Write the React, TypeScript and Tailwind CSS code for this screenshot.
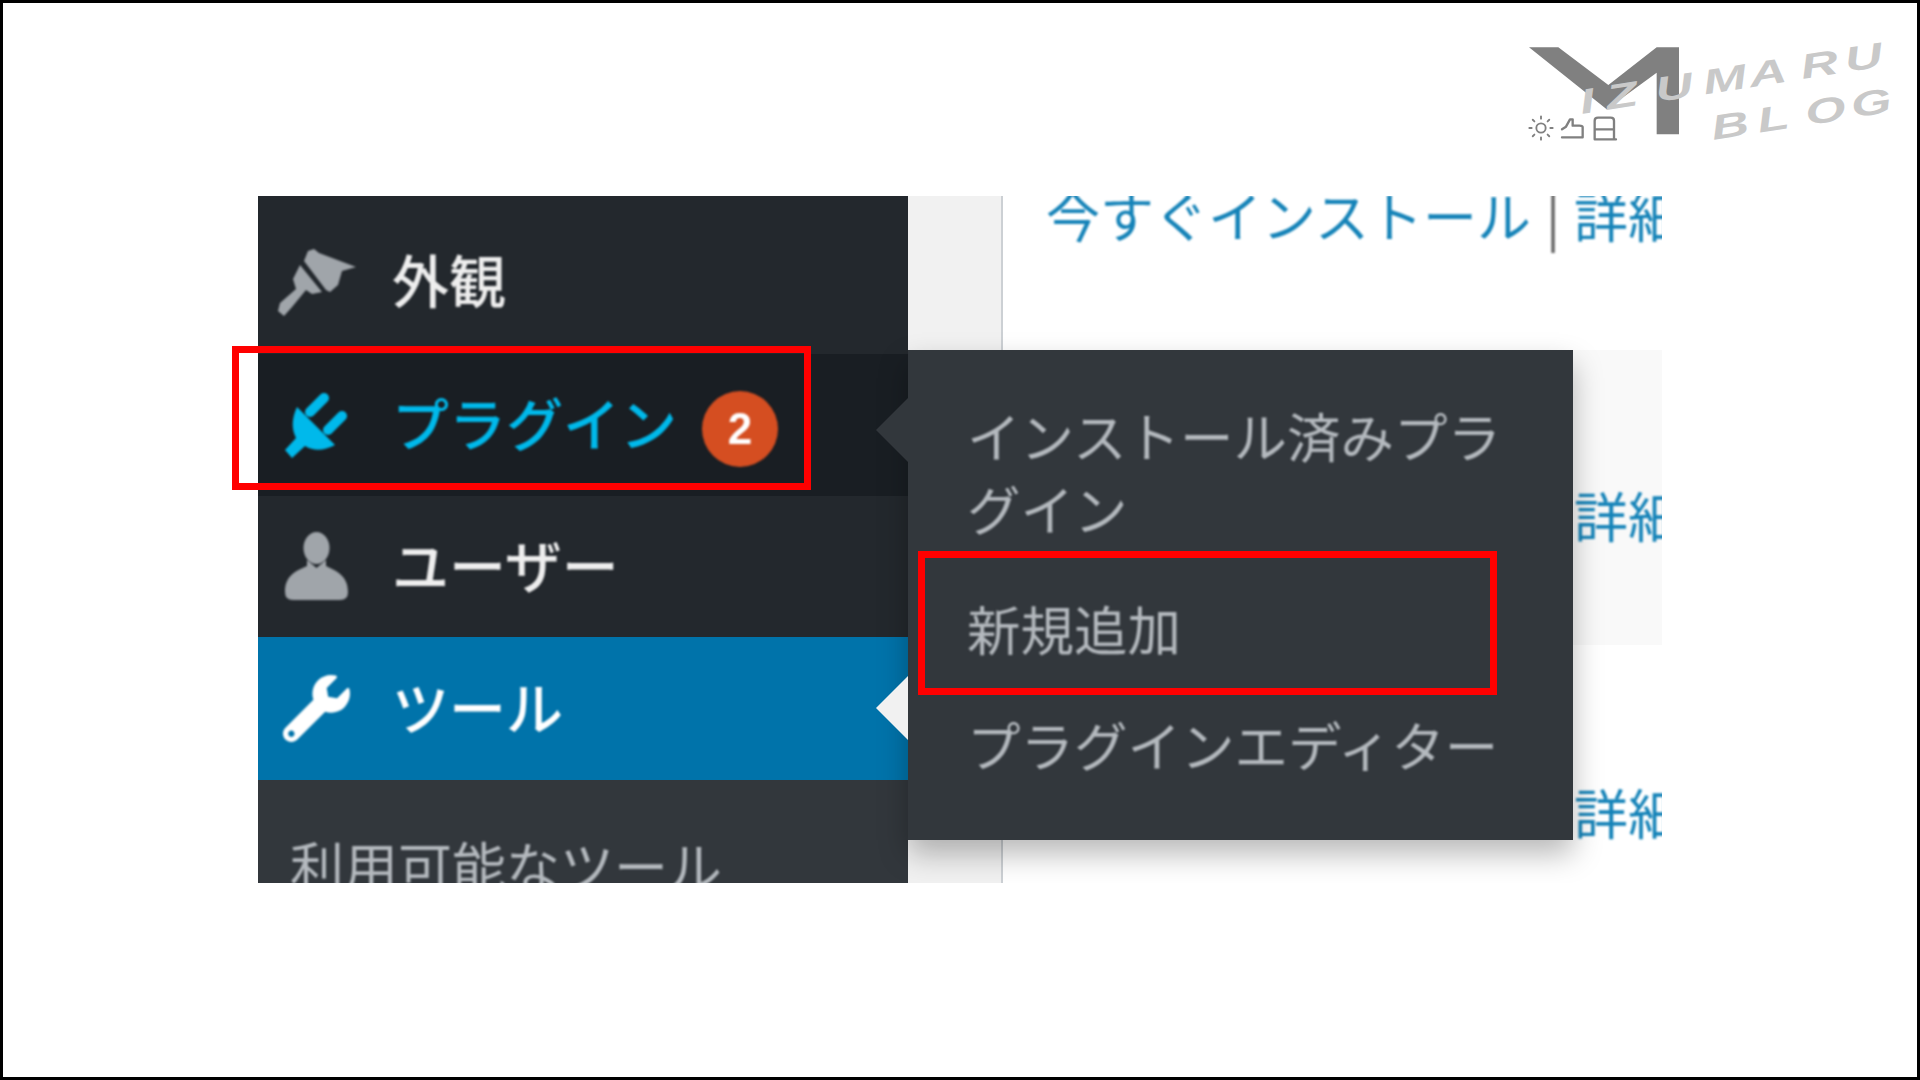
import { FaWrench } from "react-icons/fa";
import { Sun } from "lucide-react";

const jp = { fontFamily: '"Noto Sans CJK JP", "Noto Sans", sans-serif' };

function Brush() {
  return (
    <svg width="78" height="67" viewBox="0 0 78 67" fill="#a0a5aa">
      <path d="M30 2 L36 0 L41 4 L78 18 L64 22 L60 36 L52 43 L48 41 L26 12 Z" />
      <path d="M22 16 L44 43 L34 45 L28 41 L14 58 L6 67 L0 62 L2 54 L18 40 L15 30 Z" />
    </svg>
  );
}

function Plug() {
  return (
    <svg width="67" height="67" viewBox="0 0 67 67" fill="#00b9eb">
      <path d="M13 15 L51 53 Q34 62 21 54 L8 66 L1 58 L12 46 Q5 32 13 15 Z" />
      <path d="M26 20 L40 6" stroke="#00b9eb" strokeWidth="10" strokeLinecap="round" />
      <path d="M44 38 L58 24" stroke="#00b9eb" strokeWidth="10" strokeLinecap="round" />
    </svg>
  );
}

function User() {
  return (
    <svg width="63" height="69" viewBox="0 0 63 69" fill="#a0a5aa">
      <ellipse cx="31.5" cy="16" rx="13" ry="16" />
      <path d="M22 28 L22 34 C10 39 0 44 0 60 Q0 68 8 68 L55 68 Q63 68 63 60 C63 44 52 39 41 34 L41 28 L31.5 36 Z" />
    </svg>
  );
}

function Logo() {
  return (
    <svg width="440" height="140" viewBox="0 0 1320 420" className="absolute left-[1477px] top-[17px]">
      <polygon points="147,82 235,82 385,195 530,82 597,82 597,343 530,343 530,158 380,268" fill="#808080" />
      <g style={{ fontFamily: '"Liberation Sans", sans-serif', fontStyle: "italic", fontWeight: 700 }} fill="#c9c9c9" fontSize="104">
        <text transform="rotate(-9 305 282) translate(305 282) scale(1.5 1)" x="0 53 153 250 343 447 537" y="0">IZUMARU</text>
        <text transform="rotate(-9 700 360) translate(700 360) scale(1.5 1)" x="0 93 190 283" y="0">BLOG</text>
      </g>
      <g fill="none" stroke="#808080" strokeWidth="7" strokeLinejoin="round" strokeLinecap="round">
        <path d="M246 352 L308 352 L308 322 Q308 317 298 317 L278 317 L278 298 L270 298 L258 320 L246 328" />
        <path d="M344 358 L344 302 Q344 293 354 293 L392 293 Q402 293 402 302 L402 358 M344 328 L402 328 M344 358 L408 358" />
      </g>
    </svg>
  );
}

function DetailRow({ className, full }: { className: string; full?: boolean }) {
  return (
    <div className={className}>
      <div className="flex whitespace-nowrap text-[54px] leading-[73px] text-[#1583b8] blur-[1.2px]" style={jp}>
        {full ? (
          <>
            <span className="w-[486px] shrink-0">今すぐインストール</span>
            <span className="w-[42px] shrink-0 text-center text-[#666]">|</span>
          </>
        ) : (
          <span className="w-[528px] shrink-0" />
        )}
        <span>詳細を表示</span>
      </div>
    </div>
  );
}

function SideRow({ bg, icon, iconBox, label, color, extra, pt }: any) {
  return (
    <div className={`flex shrink-0 items-center ${bg} ${pt}`}>
      <div className={iconBox}>{icon}</div>
      <span className={`mb-[7px] text-[57px] font-medium leading-none ${color} blur-[1px]`} style={jp}>{label}</span>
      {extra}
    </div>
  );
}

export default function App() {
  return (
    <div className="relative h-screen w-screen overflow-hidden border-[3px] border-black bg-white">
      <div className="ml-[255px] mt-[193px] flex h-[687px] w-[1404px]">
        <div className="relative flex h-full w-full overflow-hidden">
          <div className="flex w-[650px] shrink-0 flex-col bg-[#32373c]">
            <SideRow bg="bg-[#23282d] h-[158px]" pt="pt-[14px]" iconBox="ml-[20px] mr-[36px] flex w-[78px] justify-center blur-[1px]" icon={<Brush />} label="外観" color="text-[#eeeeee]" />
            <SideRow
              bg="bg-[#191e23] h-[142px]"
              pt="pt-0"
              iconBox="ml-[26px] mr-[41px] blur-[0.8px]"
              icon={<Plug />}
              label="プラグイン"
              color="text-[#00b9eb]"
              extra={
                <span className="ml-[25px] mt-[8px] flex h-[76px] w-[76px] items-center justify-center rounded-full bg-[#d54e21] text-[44px] font-bold text-white blur-[0.8px]" style={{ fontFamily: '"Liberation Sans", sans-serif' }}>2</span>
              }
            />
            <SideRow bg="bg-[#23282d] h-[141px]" pt="pt-0" iconBox="ml-[27px] mr-[44px] blur-[1px]" icon={<User />} label="ユーザー" color="text-[#eeeeee]" />
            <SideRow bg="bg-[#0073aa] h-[143px]" pt="pt-0" iconBox="ml-[25px] mr-[42px] text-white blur-[0.8px]" icon={<FaWrench size={67} />} label="ツール" color="text-white" />
            <div className="shrink-0 whitespace-nowrap pl-[32px] pt-[49px] text-[54px] leading-[72px] text-[#b4b9be] blur-[1px]" style={jp}>利用可能なツール</div>
          </div>

          <div className="w-[93px] shrink-0 bg-[#f1f1f1]" />
          <div className="flex-1 overflow-hidden border-l-2 border-[#ccd0d4] bg-white">
            <DetailRow full className="-mt-[18px] h-[154px] pl-[43px]" />
            <DetailRow className="mt-[18px] h-[295px] bg-[#f9f9f9] pl-[43px] pt-[128px]" />
            <DetailRow className="h-[238px] pl-[43px] pt-[130px]" />
          </div>

          <div className="absolute left-[650px] top-[154px] h-[490px] w-[665px] bg-[#32373c] pl-[59px] pr-[65px] pt-[48px] text-[53.5px] leading-[73px] text-[#b4b9be] shadow-[0_14px_28px_rgba(0,0,0,0.28)]" style={jp}>
            <div className="blur-[1.2px]">インストール済みプラグイン</div>
            <div className="mt-[47px] blur-[1.2px]">新規追加</div>
            <div className="mt-[43px] whitespace-nowrap blur-[1.2px]">プラグインエディター</div>
          </div>
          <div className="absolute left-[618px] top-[202px] h-0 w-0 border-y-[32px] border-r-[32px] border-y-transparent border-r-[#32373c]" />
          <div className="absolute left-[618px] top-[480px] h-0 w-0 border-y-[32px] border-r-[32px] border-y-transparent border-r-[#f1f1f1]" />
        </div>
      </div>

      <div className="absolute left-[229px] top-[343px] h-[144px] w-[579px] border-[7px] border-[#ff0000]" />
      <div className="absolute left-[915px] top-[548px] h-[144px] w-[579px] border-[7px] border-[#ff0000]" />

      <Logo />
      <Sun className="absolute left-[1524px] top-[111px] text-[#808080]" size={28} strokeWidth={1.6} />
    </div>
  );
}
